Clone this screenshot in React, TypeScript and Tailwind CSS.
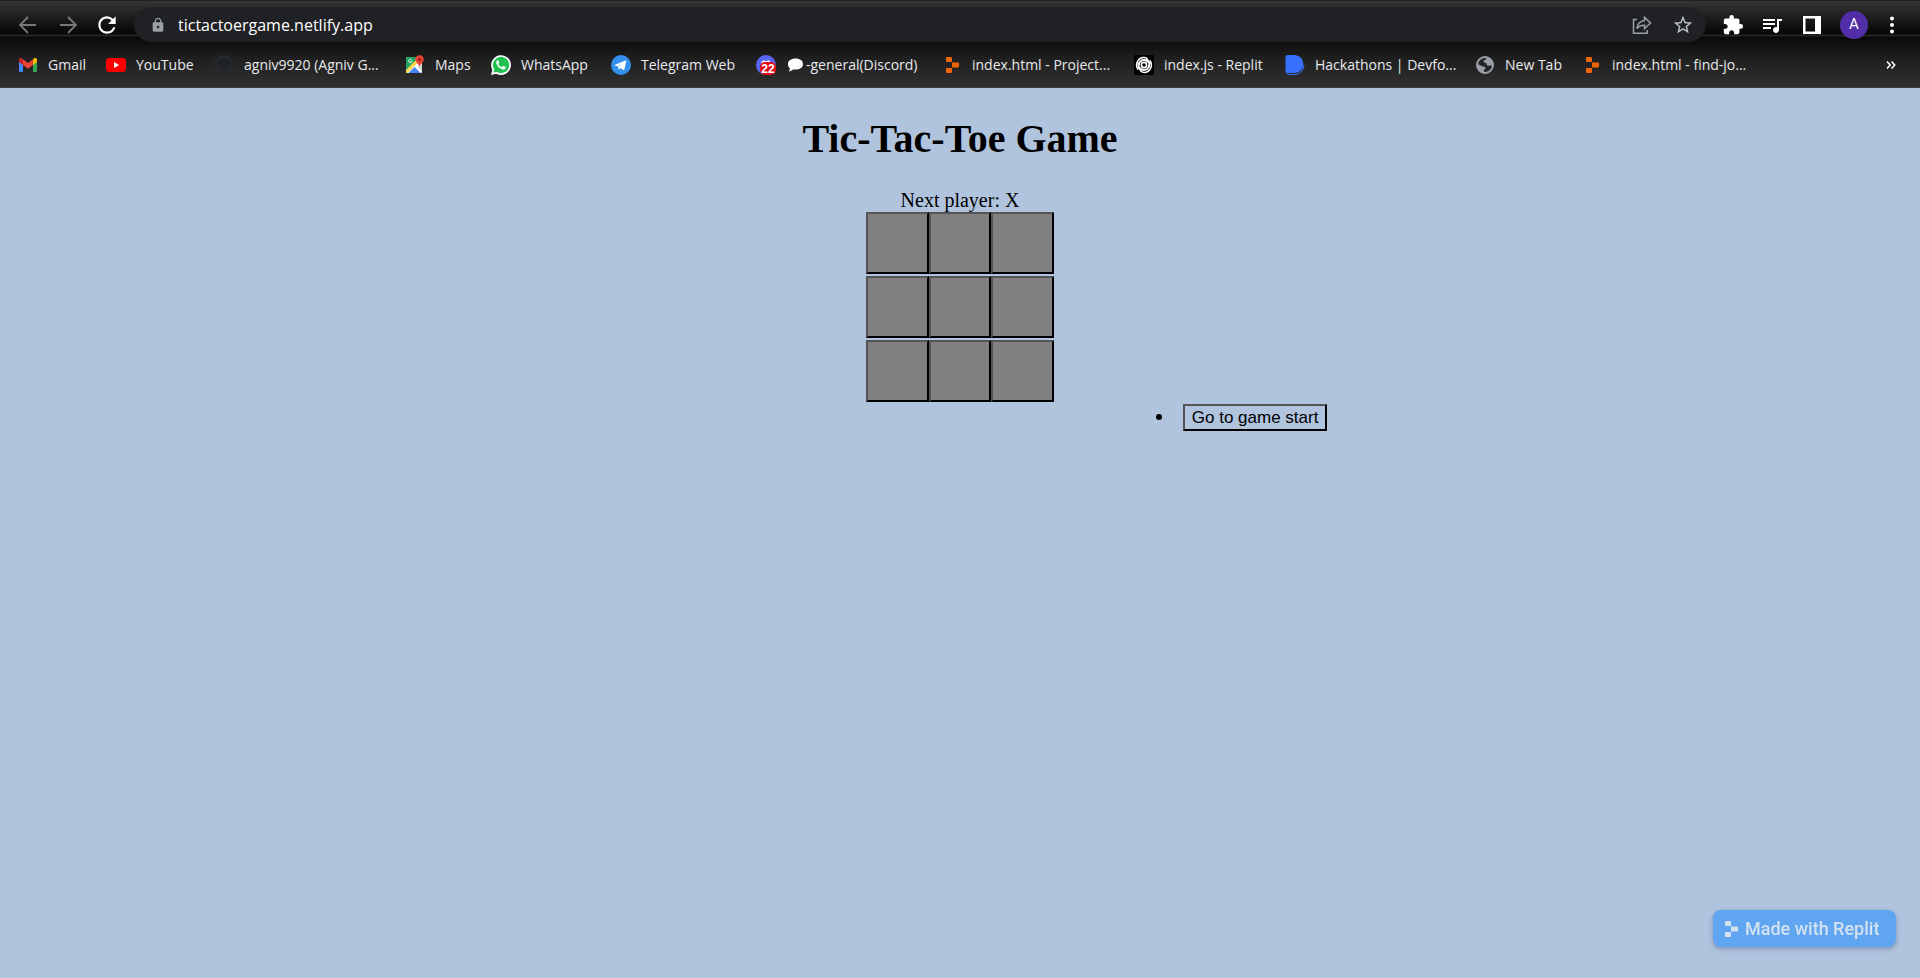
import React, { useState } from "react";
import { MdExtension, MdLock, MdQueueMusic, MdRefresh, MdStarOutline } from "react-icons/md";

function ReplitMark({ className }: { className: string }) {
  return (
    <svg viewBox="0 0 20 20" className={className} aria-hidden="true">
      <path d="M4 3a1 1 0 0 1 1-1h4a1 1 0 0 1 1 1v4H5a1 1 0 0 1-1-1zM10 7.500h6a1 1 0 0 1 1 1v3a1 1 0 0 1-1 1h-6zM5 13h5v4a1 1 0 0 1-1 1H5a1 1 0 0 1-1-1v-3a1 1 0 0 1 1-1z" fill="currentColor" />
    </svg>
  );
}

const icon = "size-5 shrink-0";

function GmailIcon() {
  return (
    <svg viewBox="0 0 20 20" className={icon} aria-hidden="true">
      <path d="M1 6v9.500A1.200 1.200 0 0 0 2.200 17H5V9z" fill="#4285f4" />
      <path d="M19 6v9.500a1.200 1.200 0 0 1-1.200 1.500H15V9z" fill="#34a853" />
      <path d="M15 5.200V10l4-3V5c0-2-2-2.500-3.200-1.500z" fill="#fbbc04" />
      <path d="M1 5v2l4 3V5.200L4.200 3.500C3 2.500 1 3 1 5z" fill="#c5221f" />
      <path d="M5 10V4.200l5 3.800 5-3.800V10l-5 3.800z" fill="#ea4335" />
    </svg>
  );
}

function YouTubeIcon() {
  return (
    <svg viewBox="0 0 20 20" className={icon} aria-hidden="true">
      <rect x="0" y="3" width="20" height="14" rx="3.500" fill="#f00" />
      <path d="M8 7v6l5.200-3z" fill="#fff" />
    </svg>
  );
}

function GitHubIcon() {
  return (
    <svg viewBox="0 0 16 16" className={icon} aria-hidden="true">
      <path
        fill="#24292f"
        d="M8 0C3.580 0 0 3.580 0 8c0 3.540 2.290 6.530 5.470 7.590.4.070.55-.17.55-.38 0-.19-.01-.82-.01-1.490-2.010.37-2.530-.49-2.690-.94-.09-.23-.48-.94-.82-1.130-.28-.15-.68-.52-.01-.53.63-.01 1.080.58 1.230.82.72 1.210 1.870.87 2.330.66.07-.52.28-.87.51-1.070-1.780-.2-3.640-.89-3.640-3.950 0-.87.31-1.590.82-2.150-.08-.2-.36-1.020.08-2.120 0 0 .67-.21 2.200.82a7.600 7.600 0 0 1 4 0c1.530-1.040 2.200-.82 2.200-.82.44 1.100.16 1.920.08 2.120.51.56.82 1.270.82 2.150 0 3.070-1.870 3.750-3.650 3.950.29.25.54.73.54 1.480 0 1.070-.01 1.930-.01 2.200 0 .21.15.46.55.38A8.010 8.010 0 0 0 16 8c0-4.420-3.580-8-8-8z"
      />
    </svg>
  );
}

function MapsIcon() {
  return (
    <svg viewBox="0 0 20 20" className={icon} aria-hidden="true">
      <rect x="1" y="2" width="16" height="16" rx="1" fill="#fff" />
      <path d="M1 3a1 1 0 0 1 1-1h13L1 16z" fill="#1fa463" />
      <path d="M1 17.500V15L12 4l2 2.500L2.500 18z" fill="#fdd84e" />
      <path d="M17 8v8.500L12.500 12z" fill="#d5d8db" />
      <path d="M3.500 18 9.500 12l6 6z" fill="#4285f4" />
      <path d="M6.800 5.300a1.700 1.700 0 1 0 .1 1.300H5.300" fill="none" stroke="#e6f4ea" strokeWidth="0.9" />
      <path d="M14.500 0.300a4.200 4.200 0 0 0-4.200 4.200c0 3 3.500 4 4.200 7.500.7-3.500 4.200-4.500 4.200-7.500A4.200 4.200 0 0 0 14.500.3z" fill="#ea4335" />
      <circle cx="14.500" cy="4.500" r="1.500" fill="#8c2218" />
    </svg>
  );
}

function WhatsAppIcon() {
  return (
    <svg viewBox="0 0 20 20" className={icon} aria-hidden="true">
      <path d="M0 20l1.400-5.100A9.900 9.900 0 1 1 5.200 18.700z" fill="#fff" />
      <path d="M2.400 17.600l.9-3.200a8.100 8.100 0 1 1 2.600 2.500z" fill="#1fc14f" />
      <path d="M6.800 5.300c-.5 0-1.500.8-1.500 2.300 0 3 4.100 7 7 7 1.400 0 2.500-.8 2.500-2.100 0-.5-.1-.6-.4-.7l-1.900-.9c-.3-.1-.5 0-.7.2l-.7.9c-.2.2-.4.200-.6.1-1.300-.6-2.400-1.500-3.100-2.800-.1-.3 0-.4.1-.6l.6-.8c.1-.2.1-.4 0-.6l-.7-1.700c-.1-.3-.3-.3-.6-.3z" fill="#fff" />
    </svg>
  );
}

function TelegramIcon() {
  return (
    <svg viewBox="0 0 20 20" className={icon} aria-hidden="true">
      <circle cx="10" cy="10" r="10" fill="#3390ec" />
      <path d="M3.600 9.900 14.300 5.500c.6-.2 1 .1.900.8l-1.800 8.200c-.1.600-.5.700-1 .4l-2.800-2-1.400 1.300c-.3.3-.6.200-.7-.2l-.8-2.700-2.900-.9c-.5-.1-.5-.4-.2-.5z" fill="#fff" />
      <path d="M6.700 11.300l5.800-4-4.500 4.500-.3 2.200z" fill="#b5d7f7" />
    </svg>
  );
}

function DiscordIcon() {
  return (
    <span className="relative size-5 shrink-0">
      <svg viewBox="0 0 20 20" className={icon} aria-hidden="true">
        <circle cx="10" cy="10" r="10" fill="#5865f2" />
        <path d="M5 8.500c.5-2 1.300-3 3.300-3.300l.5.700h2.400l.5-.7c2 .3 2.800 1.300 3.300 3.300z" fill="#fff" />
      </svg>
      <span className="absolute right-0 bottom-0 flex h-[13px] w-4 items-center justify-center rounded-[5px] bg-[#e00b16] font-['Liberation_Sans',Arial,sans-serif] text-[12px] leading-none font-bold text-white">
        22
      </span>
    </span>
  );
}

function SwirlIcon() {
  return (
    <svg viewBox="0 0 20 20" className={icon} aria-hidden="true">
      <rect width="20" height="20" rx="1" fill="#000" />
      <g fill="none" stroke="#fff" strokeLinecap="round">
        <circle cx="10" cy="10" r="2.600" strokeWidth="1.700" />
        <path d="M7 15.500C4 13.500 3.800 8.500 6.500 6.300 8.500 4.600 12 4.500 14 6.800" strokeWidth="2" />
        <path d="M13 4.500c3 2 3.200 7 .5 9.200-2 1.700-5.500 1.800-7.500-.5" strokeWidth="2" />
        <path d="M3.800 14A7.500 7.500 0 0 1 9 2.600c2-.1 3 .2 4 .900" strokeWidth="1.500" />
        <path d="M16.200 6A7.500 7.500 0 0 1 11 17.400c-2 .1-3-.2-4-.900" strokeWidth="1.500" />
      </g>
    </svg>
  );
}

function DevfolioIcon() {
  return (
    <svg viewBox="0 0 20 20" className={icon} aria-hidden="true">
      <path d="M1 15.500c.5 3 1.500 4 3 4h5.500c5 0 9-3.500 9.500-9.500" fill="none" stroke="#3770ff" strokeWidth="1" />
      <path d="M.5 1.500A1.500 1.500 0 0 1 2 0h7c5.500 0 9.300 3.500 9.300 9S14.500 18 9 18H3c-1.500 0-2.500-1-2.500-2.500z" fill="#3770ff" />
    </svg>
  );
}

function GlobeIcon() {
  return (
    <svg viewBox="0 0 20 20" className={icon} aria-hidden="true">
      <circle cx="10" cy="10" r="8" fill="#252525" stroke="#9aa0a6" strokeWidth="2" />
      <path d="M2 8.500 6.500 11c1.500.8 3.500.3 4 1.700.3 1-1.300 1.500-1.500 2.500L8.800 18C4.500 17.500 1.500 13.500 2 8.500z" fill="#9aa0a6" />
      <path d="M11 2l.5 1.500c-.5 1.500-3 1.500-3 3 0 1.200 1.500 1 2.500 1.500s.3 1.800 1.500 2.500c1.500.8 3-.5 5.200.5C18.500 6.500 15.500 2.500 11 2z" fill="#9aa0a6" />
    </svg>
  );
}

const replitOrange = <ReplitMark className="size-5 shrink-0 text-[#f26207]" />;

const bookmarks: { label: string; icon: React.ReactNode; width: string; bubble?: boolean }[] = [
  { label: "Gmail", icon: <GmailIcon />, width: "w-[88px]" },
  { label: "YouTube", icon: <YouTubeIcon />, width: "w-[108px]" },
  { label: "agniv9920 (Agniv G...", icon: <GitHubIcon />, width: "w-[191px]" },
  { label: "Maps", icon: <MapsIcon />, width: "w-[86px]" },
  { label: "WhatsApp", icon: <WhatsAppIcon />, width: "w-[120px]" },
  { label: "Telegram Web", icon: <TelegramIcon />, width: "w-[145px]" },
  { label: "-general(Discord)", icon: <DiscordIcon />, width: "w-[186px]", bubble: true },
  { label: "index.html - Project...", icon: replitOrange, width: "w-[192px]" },
  { label: "index.js - Replit", icon: <SwirlIcon />, width: "w-[151px]" },
  { label: "Hackathons | Devfo...", icon: <DevfolioIcon />, width: "w-[190px]" },
  { label: "New Tab", icon: <GlobeIcon />, width: "w-[107px]" },
  { label: "index.html - find-jo...", icon: replitOrange, width: "w-[176px]" },
];

function Toolbar() {
  return (
    <div className="flex h-[47px] items-center pr-4 pl-4">
      <button aria-label="Back" className="mr-4 text-[#77797c]">
        <svg viewBox="0 0 24 24" className="size-6" fill="none" stroke="currentColor" strokeWidth="1.800" aria-hidden="true">
          <path d="M20 12H4.500M12 4l-8 8 8 8" />
        </svg>
      </button>
      <button aria-label="Forward" className="mr-[14px] text-[#77797c]">
        <svg viewBox="0 0 24 24" className="size-6" fill="none" stroke="currentColor" strokeWidth="1.800" aria-hidden="true">
          <path d="M4 12h15.500M12 4l8 8-8 8" />
        </svg>
      </button>
      <button aria-label="Reload" className="mr-[14px] text-white">
        <MdRefresh className="size-[26px]" />
      </button>
      <div className="flex h-[35px] flex-1 items-center rounded-full bg-[#202124] pr-3 pl-4">
        <MdLock className="size-4 text-[#9aa0a6]" />
        <input
          aria-label="Address"
          defaultValue="tictactoergame.netlify.app"
          className="ml-3 min-w-0 flex-1 bg-transparent text-[16px] leading-6 text-white outline-none"
        />
        <button aria-label="Share this page" className="mr-5 text-[#9aa0a6]">
          <svg viewBox="0 0 20 20" className="size-5" fill="none" stroke="currentColor" strokeWidth="1.500" aria-hidden="true">
            <path d="M5 4.500H1.500v13.700h13.700V15" />
            <path d="M12.500 2.200 18.500 8l-6 5.500v-3.300c-3.500 0-5.800.8-7.500 3.300.4-4.200 3-7.200 7.500-7.900z" />
          </svg>
        </button>
        <button aria-label="Bookmark this tab" className="text-[#bdc1c6]">
          <MdStarOutline className="size-[22px]" />
        </button>
      </div>
      <div className="ml-4 flex items-center gap-4 text-white">
        <button aria-label="Extensions"><MdExtension className="size-[22px]" /></button>
        <button aria-label="Media controls"><MdQueueMusic className="size-6" /></button>
        <button aria-label="Side panel">
          <svg viewBox="0 0 24 24" className="size-6" aria-hidden="true">
            <path d="M3 3h18v18H3zM5.500 5.500v13H15v-13z" fill="currentColor" fillRule="evenodd" />
          </svg>
        </button>
        <button aria-label="Profile" className="flex size-7 items-center justify-center rounded-full bg-[#512da8] font-[Roboto,sans-serif] text-[15px]">
          A
        </button>
        <button aria-label="Menu">
          <svg viewBox="0 0 20 24" className="h-6 w-5" fill="currentColor" aria-hidden="true">
            <circle cx="8" cy="5.500" r="2" />
            <circle cx="8" cy="12" r="2" />
            <circle cx="8" cy="18.500" r="2" />
          </svg>
        </button>
      </div>
    </div>
  );
}

function BookmarksBar() {
  return (
    <nav aria-label="Bookmarks" className="flex h-[34px] items-center pr-6 pl-[18px]">
      {bookmarks.map((b) => (
        <a key={b.label} href="#" className={`flex shrink-0 items-center gap-[10px] text-[14px] leading-5 whitespace-nowrap text-[#e8eaed] ${b.width}`}>
          {b.icon}
          <span className="flex items-center">
            {b.bubble && (
              <svg viewBox="0 0 18 16" className="mr-[2px] h-4 w-[18px]" aria-hidden="true">
                <path d="M9.500 1.500c4.500 0 7.500 2.300 7.500 5.500s-3 5.600-7.500 5.600c-.9 0-1.700 0-2.500-.2-1.200 1-2.500 1.900-4.300 2 .8-.8 1.100-1.900 1.100-3.200C2.600 10.300 2 8.800 2 7c0-3.200 3-5.500 7.500-5.500z" fill="#fff" />
              </svg>
            )}
            {b.label}
          </span>
        </a>
      ))}
      <button aria-label="More bookmarks" className="ml-auto text-white">
        <svg viewBox="0 0 10 10" className="size-[10px]" fill="none" stroke="currentColor" strokeWidth="1.600" aria-hidden="true">
          <path d="M1 1.500 4.200 5 1 8.500M5.500 1.500 8.700 5 5.500 8.500" />
        </svg>
      </button>
    </nav>
  );
}

const bevel = "border-2 border-t-[#555] border-r-black border-b-black border-l-[#555]";

export default function App() {
  const [squares, setSquares] = useState<string[]>(Array(9).fill(""));
  const next = squares.filter(Boolean).length % 2 === 0 ? "X" : "O";
  const play = (i: number) => {
    if (!squares[i]) setSquares(squares.map((s, k) => (k === i ? next : s)));
  };

  return (
    <div className="flex min-h-screen flex-col bg-[#b0c4de]">
      <header className="flex h-[88px] flex-col overflow-hidden border-t border-b border-t-[#202020] border-b-[#3c3c3c] bg-[linear-gradient(to_bottom,#353535_0px,#060606_33px,#242424_34px,#242424_35px,#080808_36px,#1e1e1e_56px,#303030_86px)] font-['Open_Sans','Noto_Sans',sans-serif]">
        <Toolbar />
        <BookmarksBar />
      </header>

      <main className="flex-1 font-['Liberation_Serif','Times_New_Roman',serif] text-black">
        <h1 className="mt-7 text-center text-[40px] leading-[46px] font-bold">Tic-Tac-Toe Game</h1>
        <p className="mt-[27px] text-center text-[20px] leading-[23px]">Next player: {next}</p>
        <div className="mx-auto grid w-[188px] grid-cols-3 gap-y-[2px]">
          {squares.map((s, i) => (
            <button key={i} aria-label={`Square ${i + 1}`} onClick={() => play(i)} className={`h-[62px] bg-[#808080] text-[30px] font-bold ${bevel}`}>
              {s}
            </button>
          ))}
        </div>
        <ul className="mt-[2px] ml-[59%] list-disc pl-[42px] text-[20px] leading-[23px]">
          <li className="pl-2">
            <button onClick={() => setSquares(Array(9).fill(""))} className={`px-[7px] py-px font-['Liberation_Sans',Arial,sans-serif] text-[17px] leading-[21px] ${bevel}`}>
              Go to game start
            </button>
          </li>
        </ul>
      </main>

      <a href="#" className="fixed right-6 bottom-[31px] flex h-[37px] w-[183px] items-center gap-1 rounded-lg bg-[#5fa5f1] pl-2 font-[Roboto,sans-serif] text-[18px] font-medium whitespace-nowrap text-[#d3e1f1] shadow-[0_2px_5px_rgba(60,70,110,0.4)]">
        <ReplitMark className="size-5 shrink-0" />
        Made with Replit
      </a>
    </div>
  );
}
